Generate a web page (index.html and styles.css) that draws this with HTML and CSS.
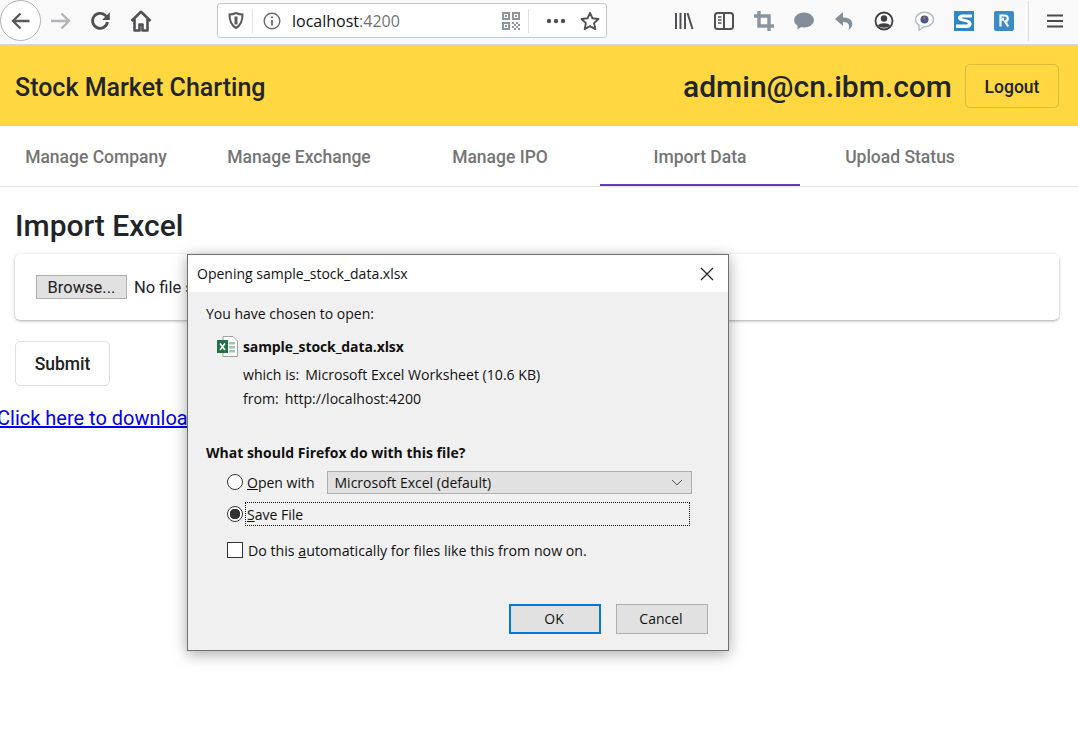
FILE: index.html
```html
<!DOCTYPE html>
<html lang="en">
<head>
    <meta charset="UTF-8">
    <meta name="viewport" content="width=device-width, initial-scale=1.0">
    <title>Stock Market Charting</title>
    <link rel="stylesheet" href="styles.css">
</head>
<body>

    <!-- browser toolbar -->
    <div class="toolbar">
        <div class="back">
            <svg width="24" height="24" viewBox="0 0 24 24"><path d="M20.5 12H4.5M11.5 4.500 4 12l7.500 7.500" fill="none" stroke="#5a5a5c" stroke-width="2.400"/></svg>
        </div>
        <div class="tool">
            <svg width="24" height="24" viewBox="0 0 24 24"><path d="M2 12h17.500M12.500 4.500 20 12l-7.500 7.500" fill="none" stroke="#b5b5b7" stroke-width="2.400"/></svg>
        </div>
        <div class="tool">
            <svg width="22" height="22" viewBox="0 0 22 22"><path d="M17.500 12a7.500 7.500 0 1 1-2.300-6.700L18 8" fill="none" stroke="#515153" stroke-width="2.800"/><path d="M19.800 2.300v7.700h-7.700z" fill="#515153"/></svg>
        </div>
        <div class="tool">
            <svg width="22" height="22" viewBox="0 0 22 22"><path d="M1.500 11 11 1.800 20.500 11" fill="none" stroke="#515153" stroke-width="2.600" stroke-linejoin="round"/><path d="M4.500 9v11.500h5v-6h3v6h5V9" fill="none" stroke="#515153" stroke-width="2.600" stroke-linejoin="round"/></svg>
        </div>

        <div class="urlbar">
            <svg class="url-shield" width="16" height="17" viewBox="0 0 16 17"><path d="M8 1c2 1 4.500 1.500 6.500 1.500 0 6-1 10.500-6.500 13.500C2.500 13 1.500 8.500 1.500 2.500 3.500 2.500 6 2 8 1z" fill="none" stroke="#5a5a5c" stroke-width="2"/><path d="M8 4.500v8" stroke="#5a5a5c" stroke-width="3"/></svg>
            <span class="url-line"></span>
            <svg class="url-info" width="18" height="18" viewBox="0 0 18 18"><circle cx="9" cy="9" r="7.800" fill="none" stroke="#6a6a6c" stroke-width="1.400"/><path d="M9 8v5.500" stroke="#6a6a6c" stroke-width="1.800"/><circle cx="9" cy="5.300" r="1.100" fill="#6a6a6c"/></svg>
            <span class="url-text">localhost<span class="url-port">:4200</span></span>
            <svg class="url-qr" width="18" height="18" viewBox="0 0 18 18">
                <path d="M0 0h8v8H0zM2 2v4h4V2zM10 0h8v8h-8zM12 2v4h4V2zM0 10h8v8H0zM2 12v4h4v-4z" fill="#8f959c" fill-rule="evenodd"/>
                <path d="M3 3h2v2H3zM13 3h2v2h-2zM3 13h2v2H3zM10 10h2v2h-2zM14 10h2v2h-2zM12 12h2v2h-2zM16 12h2v2h-2zM10 14h2v2h-2zM14 14h2v2h-2zM12 16h2v2h-2zM16 16h2v2h-2z" fill="#8f959c"/>
            </svg>
            <span class="url-line url-line-right"></span>
            <svg class="url-dots" width="20" height="6" viewBox="0 0 20 6"><circle cx="3" cy="3" r="2.200" fill="#515153"/><circle cx="10" cy="3" r="2.200" fill="#515153"/><circle cx="17" cy="3" r="2.200" fill="#515153"/></svg>
            <svg class="url-star" width="20" height="20" viewBox="0 0 20 20"><path d="M10 1.800 12.500 7.300l6 .7-4.400 4.100 1.200 6L10 15.100l-5.300 3 1.200-6L1.500 8l6-.7z" fill="none" stroke="#515153" stroke-width="1.900" stroke-linejoin="round"/></svg>
        </div>

        <div class="tool first-right">
            <svg width="20" height="20" viewBox="0 0 20 20"><path d="M2 2v16M6.500 2v16M11 2v16M13.500 2l5 16" fill="none" stroke="#515153" stroke-width="2"/></svg>
        </div>
        <div class="tool">
            <svg width="20" height="20" viewBox="0 0 20 20"><rect x="1" y="2" width="18" height="16" rx="2.500" fill="none" stroke="#515153" stroke-width="2"/><path d="M10 2v16" stroke="#515153" stroke-width="2"/><path d="M4 6h3.500M4 9h3.500M4 12h3.500" stroke="#515153" stroke-width="1.300"/></svg>
        </div>
        <div class="tool">
            <svg width="20" height="20" viewBox="0 0 20 20"><path d="M5 0v15h15M0 5h15v15" fill="none" stroke="#8a949e" stroke-width="3.400"/></svg>
        </div>
        <div class="tool">
            <svg width="20" height="18" viewBox="0 0 20 18"><ellipse cx="10" cy="8" rx="10" ry="7.500" fill="#848e98"/><path d="M3.500 12v5.500l6-4z" fill="#848e98"/></svg>
        </div>
        <div class="tool">
            <svg width="20" height="20" viewBox="0 0 20 20"><path d="M9 1 1 8l8 7v-4c3.500 0 5.500 1 6 3.500.3 1.500 0 3-.5 4.500 3-2 4.500-5 3.500-8-1-3-4-4.500-9-4.500z" fill="#848e98"/></svg>
        </div>
        <div class="tool">
            <svg width="20" height="20" viewBox="0 0 20 20"><circle cx="10" cy="10" r="8.500" fill="none" stroke="#3f3f41" stroke-width="1.800"/><circle cx="10" cy="7.500" r="3.200" fill="#3f3f41"/><path d="M4 14.500c1.500-3 10.500-3 12 0-2 3-10 3-12 0z" fill="#3f3f41"/></svg>
        </div>
        <div class="tool">
            <svg width="20" height="20" viewBox="0 0 20 20"><ellipse cx="10.500" cy="8.500" rx="9" ry="7.300" fill="#fff" stroke="#b4b9be" stroke-width="1.400"/><path d="M5 14v5l5-3.500" fill="#fff" stroke="#b4b9be" stroke-width="1.400"/><circle cx="10.500" cy="8.500" r="4" fill="#4d5a88"/><circle cx="10.500" cy="7" r="1.400" fill="#a8665a"/></svg>
        </div>
        <div class="tool">
            <svg width="20" height="20" viewBox="0 0 20 20"><rect width="20" height="20" fill="#2f86c4"/><path d="M18 3.500H8C3.500 3.500 2.500 9 7 10l6 1.500c1.500.5 1 2-.5 2H2V17h11c5 0 6.500-6 1.500-8L8.500 7.500c-1-.3-.8-1 .2-1H18z" fill="#fff"/></svg>
        </div>
        <div class="tool">
            <svg width="20" height="20" viewBox="0 0 20 20"><rect width="20" height="20" rx="2" fill="#3a8cc8"/><path d="M6.500 15.500v-11h4.200c4 0 4 5.500.5 6l3 5M9 6.700v3" fill="none" stroke="#fff" stroke-width="2.200"/></svg>
        </div>
        <span class="tool-line"></span>
        <div class="menu-icon">
            <svg width="16" height="14" viewBox="0 0 16 14"><path d="M0 1.500h16M0 7h16M0 12.500h16" stroke="#4a4a4c" stroke-width="2"/></svg>
        </div>
    </div>

    <div class="topbar">
        <div class="brand">Stock Market Charting</div>
        <div class="user">admin@cn.ibm.com</div>
        <button class="logout">Logout</button>
    </div>

    <div class="tabs">
        <div class="tab tab-first">Manage Company</div>
        <div class="tab tab-second">Manage Exchange</div>
        <div class="tab">Manage IPO</div>
        <div class="tab tab-active">Import Data</div>
        <div class="tab">Upload Status</div>
    </div>

    <div class="content">
        <h2>Import Excel</h2>
        <div class="card">
            <button class="browse">Browse...</button>
            <span class="nofile">No file selected.</span>
        </div>
        <button class="submit">Submit</button>
        <a class="sample" href="#">Click here to download sample Excel file</a>
    </div>

    <!-- firefox download dialog -->
    <div class="dialog">
        <div class="dialog-title">
            <span>Opening sample_stock_data.xlsx</span>
            <svg width="14" height="14" viewBox="0 0 14 14"><path d="M1 1l12 12M13 1 1 13" stroke="#222" stroke-width="1.200"/></svg>
        </div>
        <div class="dialog-body">
            <div class="chosen">You have chosen to open:</div>
            <div class="file-row">
                <svg width="21" height="21" viewBox="0 0 21 21">
                    <path d="M6 .5h10l4.500 4.500v15.500H6z" fill="#fff" stroke="#a0a0a0"/>
                    <path d="M12 6h6v2.500h-6zM12 10h6v2.500h-6zM12 14h6v2.500h-6z" fill="#9cc7ac"/>
                    <rect x="0" y="4" width="11" height="13" fill="#1f7244"/>
                    <path d="M3 7.500l5 6.500M8 7.500l-5 6.500" stroke="#fff" stroke-width="1.700"/>
                </svg>
                <b>sample_stock_data.xlsx</b>
            </div>
            <div class="file-info"><span class="info-key">which is:</span>Microsoft Excel Worksheet (10.6 KB)</div>
            <div class="file-info file-from"><span class="info-key">from:</span>http://localhost:4200</div>
            <div class="question">What should Firefox do with this file?</div>
            <div class="choice">
                <span class="radio"></span>
                <span class="choice-label"><u>O</u>pen with</span>
                <div class="app-select">
                    <span>Microsoft Excel (default)</span>
                    <svg width="12" height="7" viewBox="0 0 12 7"><path d="M1 1l5 5 5-5" fill="none" stroke="#555" stroke-width="1"/></svg>
                </div>
            </div>
            <div class="choice">
                <span class="radio radio-on"></span>
                <span class="choice-label choice-focus"><u>S</u>ave File</span>
            </div>
            <div class="auto">
                <span class="checkbox"></span>
                <span>Do this <u>a</u>utomatically for files like this from now on.</span>
            </div>
            <div class="dialog-buttons">
                <button class="dlg-btn dlg-ok">OK</button>
                <button class="dlg-btn">Cancel</button>
            </div>
        </div>
    </div>

</body>
</html>
```

FILE: styles.css
```css
body {
    margin: 0;
    background-color: #fff;
    color: #212529;
    font-family: Roboto, sans-serif;
    overflow: hidden;
}
.toolbar {
    display: flex;
    align-items: center;
    height: 41px;
    padding-bottom: 3px;
    background-color: #f9f9fa;
    border-bottom: 1px solid #d7d7db;
}
.back {
    display: flex;
    align-items: center;
    justify-content: center;
    width: 39px;
    height: 39px;
    flex: none;
    background-color: #fff;
    border: 1px solid #b1b1b3;
    border-radius: 50%;
}
.tool {
    display: flex;
    align-items: center;
    justify-content: center;
    width: 40px;
    height: 40px;
    flex: none;
}
.first-right {
    margin-left: 57px;
}
.tool-line {
    width: 1px;
    height: 40px;
    margin-left: 4px;
    background-color: #dcdcde;
}
.menu-icon {
    display: flex;
    margin-left: 18px;
}
.urlbar {
    display: flex;
    align-items: center;
    width: 388px;
    height: 33px;
    margin-left: 56px;
    background-color: #fff;
    border: 1px solid #c8c8ca;
    border-radius: 3px;
    flex: none;
}
.url-shield {
    margin-left: 10px;
}
.url-line {
    width: 1px;
    height: 24px;
    margin-left: 8px;
    background-color: #e1e1e3;
}
.url-info {
    margin-left: 10px;
}
.url-text {
    margin-left: 11px;
    width: 210px;
    font-family: "Open Sans", sans-serif;
    font-size: 16px;
    color: #111;
}
.url-port {
    color: #737373;
}
.url-line-right {
    margin-left: 8px;
}
.url-dots {
    margin-left: 17px;
}
.url-star {
    margin-left: 14px;
}
.topbar {
    display: flex;
    align-items: center;
    height: 81px;
    padding: 0 19px 0 15px;
    background-color: #ffd740;
}
.brand {
    flex: 1;
    padding-top: 4px;
    font-size: 25px;
    font-weight: 500;
}
.user {
    padding-top: 2px;
    font-size: 30px;
    font-weight: 500;
}
.logout {
    width: 94px;
    height: 44px;
    margin-left: 13px;
    padding: 2px 0 0;
    background: none;
    border: 1px solid #dcb93c;
    border-radius: 5px;
    color: #212121;
    font-family: Roboto, sans-serif;
    font-size: 17.500px;
    font-weight: 500;
}
.tabs {
    display: flex;
    height: 60px;
    border-bottom: 1px solid #e0e0e0;
}
.tab {
    display: flex;
    align-items: center;
    justify-content: center;
    width: 200px;
    box-sizing: border-box;
    padding-top: 4px;
    border-bottom: 2px solid transparent;
    color: #757575;
    font-size: 17.500px;
    font-weight: 500;
}
.tab-first {
    width: 192px;
    margin-right: 7px;
}
.tab-second {
    margin-right: 1px;
}
.tab-active {
    border-bottom-color: #673ab7;
}
.content {
    padding: 0 19px 0 15px;
}
h2 {
    margin: 20px 0 9px;
    font-size: 30px;
    font-weight: 500;
    line-height: 38px;
}
.card {
    display: flex;
    align-items: center;
    height: 66px;
    padding-left: 21px;
    box-sizing: border-box;
    border-radius: 5px;
    box-shadow: 0 1px 3px rgba(0, 0, 0, 0.35);
}
.browse {
    width: 91px;
    height: 24px;
    padding: 1px 0 0;
    background-color: #e1e1e1;
    border: 1px solid #adadad;
    color: #222;
    font-family: Roboto, sans-serif;
    font-size: 16.500px;
}
.nofile {
    margin-left: 7px;
    font-size: 16.500px;
}
.submit {
    display: block;
    width: 95px;
    height: 45px;
    margin: 21px 0 20px;
    background-color: #fff;
    border: 1px solid #e0e0e0;
    border-radius: 5px;
    color: #212121;
    font-family: Roboto, sans-serif;
    font-size: 17.500px;
    font-weight: 500;
}
.sample {
    margin-left: -18px;
    color: #0000ee;
    font-size: 20px;
}
.dialog {
    position: absolute;
    left: 187px;
    top: 254px;
    width: 540px;
    height: 395px;
    background-color: #f0f0f0;
    border: 1px solid #707070;
    box-shadow: 0 3px 14px rgba(0, 0, 0, 0.35);
    color: #111;
    font-family: "Open Sans", sans-serif;
    font-size: 14px;
}
.dialog-title {
    display: flex;
    align-items: center;
    justify-content: space-between;
    height: 37px;
    padding: 0 14px 0 9px;
    background-color: #fff;
}
.dialog-body {
    padding: 12px 20px 0 18px;
}
.chosen {
    line-height: 20px;
}
.file-row {
    display: flex;
    align-items: center;
    height: 22px;
    margin: 11px 0 0 11px;
    gap: 5px;
}
.file-row b {
    letter-spacing: -0.100px;
}
.file-info {
    display: flex;
    margin: 8px 0 0 37px;
    font-size: 14.100px;
    line-height: 20px;
}
.info-key {
    margin-right: 6px;
}
.file-from {
    margin-top: 4px;
}
.question {
    margin-top: 34px;
    font-weight: 700;
    line-height: 20px;
}
.choice {
    display: flex;
    align-items: center;
    height: 24px;
    margin: 7px 0 0 21px;
}
.choice + .choice {
    margin-top: 8px;
}
.radio {
    width: 14px;
    height: 14px;
    flex: none;
    background-color: #fff;
    border: 1px solid #333;
    border-radius: 50%;
}
.radio-on {
    background: radial-gradient(circle, #333 0 5px, #fff 5.500px);
}
.choice-label {
    margin-left: 4px;
}
.choice-focus {
    display: flex;
    align-items: center;
    width: 445px;
    height: 24px;
    box-sizing: border-box;
    margin-left: 2px;
    border: 1px dotted #111;
}
.choice-focus u {
    margin-left: 1px;
}
.app-select {
    display: flex;
    align-items: center;
    justify-content: space-between;
    width: 365px;
    height: 23px;
    box-sizing: border-box;
    margin-left: 12px;
    padding: 0 8px 0 7px;
    background-color: #e1e1e1;
    border: 1px solid #adadad;
}
.auto {
    display: flex;
    align-items: center;
    height: 20px;
    margin: 14px 0 0 21px;
    gap: 5px;
    font-size: 14.200px;
}
.checkbox {
    width: 14px;
    height: 14px;
    flex: none;
    background-color: #fff;
    border: 1px solid #333;
}
.dialog-buttons {
    display: flex;
    justify-content: flex-end;
    gap: 15px;
    margin-top: 44px;
}
.dlg-btn {
    width: 92px;
    height: 30px;
    padding: 0 2px 2px 0;
    background-color: #e1e1e1;
    border: 1px solid #adadad;
    color: #111;
    font-family: "Open Sans", sans-serif;
    font-size: 14px;
}
.dlg-ok {
    border: 2px solid #0078d7;
}
```
